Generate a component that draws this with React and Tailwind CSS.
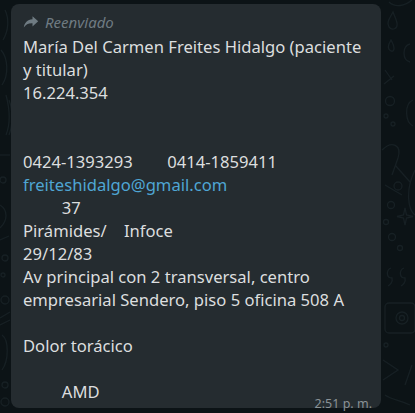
import React from "react";

function Fwd() {
  return (
    <svg width="16" height="14" viewBox="0 0 16 14" className="shrink-0">
      <path d="M9.5 1.2 L15.2 6.3 L9.5 11.4 V8.3 C5.5 8.1 2.8 9.4 0.8 12.6 C1.5 7.9 4.3 4.8 9.5 4.3 Z" fill="#6f7b82" />
    </svg>
  );
}

function Doodles() {
  return (
    <svg width="415" height="413" className="absolute inset-0" fill="none" stroke="#172024" strokeWidth="1.3">
      <path d="M389 2 C395 8 405 6 412 0" />
      <path d="M393 12 C390 18 386 22 389 27 C392 31 398 29 397 23 C396 18 394 15 393 12 Z" />
      <path d="M391 40 C388 45 387 49 391 51 C395 52 395 47 391 40 Z" />
      <path d="M410 44 C402 46 402 60 410 62" />
      <path d="M385 70 L392 80 M384 84 L394 76" />
      <circle cx="390" cy="101" r="4.5" />
      <circle cx="386" cy="116" r="2" />
      <circle cx="393" cy="124" r="2" />
      <path d="M413 100 C404 104 405 122 413 126" />
      <path d="M382 150 C392 140 402 145 398 158 L392 175 M395 165 L410 182 M385 185 L402 195" />
      <circle cx="398" cy="186" r="4" />
      <path d="M415 170 C405 190 408 210 415 215" />
      <circle cx="391" cy="205" r="3.5" />
      <circle cx="386" cy="222" r="2.5" />
      <path d="M405 208 L406.5 215 L413 216.5 L406.5 218 L405 225 L403.5 218 L397 216.5 L403.5 215 Z" />
      <circle cx="392" cy="237" r="3.5" />
      <circle cx="400" cy="248" r="2.5" />
      <path d="M391 268 C386 270 386 278 392 278 C393 282 390 285 388 286" />
      <path d="M404 268 C399 270 399 278 405 278 C406 282 403 285 401 286" />
      <rect x="385" y="303" width="30" height="30" rx="4" />
      <circle cx="402" cy="318" r="6" />
      <circle cx="402" cy="318" r="2.5" />
      <circle cx="386" cy="345" r="2" />
      <path d="M383 360 L398 370 L383 380 M412 365 L405 385" />
      <path d="M385 395 C392 400 400 400 410 405" />
      <path d="M5 10 C9 18 9 30 3 40" />
      <path d="M1 50 C8 58 9 75 2 85" />
      <path d="M6 95 C10 110 10 125 6 135 M9 100 C13 110 13 125 9 135" />
      <path d="M0 155 L10 155" />
      <circle cx="3" cy="180" r="3" />
      <path d="M0 205 C8 210 8 220 0 228" />
      <path d="M0 240 L9 236" />
      <circle cx="5" cy="258" r="3" />
      <circle cx="3" cy="275" r="2" />
      <circle cx="5" cy="300" r="4" />
      <path d="M0 318 L10 312 M0 325 L10 320" />
      <path d="M2 335 C9 340 9 360 2 370" />
      <circle cx="5" cy="385" r="3" />
      <circle cx="5" cy="402" r="4" />
    </svg>
  );
}

export default function App() {
  const L = ({ children, className = "" }) => (
    <div className={"h-[23px] whitespace-pre " + className}>{children}</div>
  );
  return (
    <div
      className="relative w-[415px] h-[413px] bg-[#0c1316] pl-[11px] pt-[4px] overflow-hidden"
      style={{ fontFamily: '"Noto Sans", "Open Sans", sans-serif' }}
    >
      <Doodles />
      <div className="relative w-[370px] h-[404px] bg-[#252c30] rounded-[8px] pl-[12px] pr-[9px] pt-[8px] text-[#dcdedf] text-[16.6px] leading-[23px]">
        <div className="flex items-center gap-[6px] h-[20px] text-[15px] italic text-[#6f7b82]">
          <Fwd />
          <span>Reenviado</span>
        </div>
        <div className="mt-[3px]">
          <L>María Del Carmen Freites Hidalgo (paciente</L>
          <L>y titular)</L>
          <L>16.224.354</L>
          <L> </L>
          <L> </L>
          <L>{"0424-1393293        0414-1859411"}</L>
          <L className="text-[#4fa6d4]">freiteshidalgo@gmail.com</L>
          <L>{"         37"}</L>
          <L>{"Pirámides/    Infoce"}</L>
          <L>29/12/83</L>
          <L>Av principal con 2 transversal, centro</L>
          <L>empresarial Sendero, piso 5 oficina 508 A</L>
          <L> </L>
          <L>Dolor torácico</L>
          <L> </L>
          <div className="flex justify-between items-end h-[23px]">
            <span className="whitespace-pre">{"         AMD"}</span>
            <span className="text-[12.5px] leading-[14px] text-[#8a9296] translate-y-[8px]">2:51 p. m.</span>
          </div>
        </div>
      </div>
    </div>
  );
}
